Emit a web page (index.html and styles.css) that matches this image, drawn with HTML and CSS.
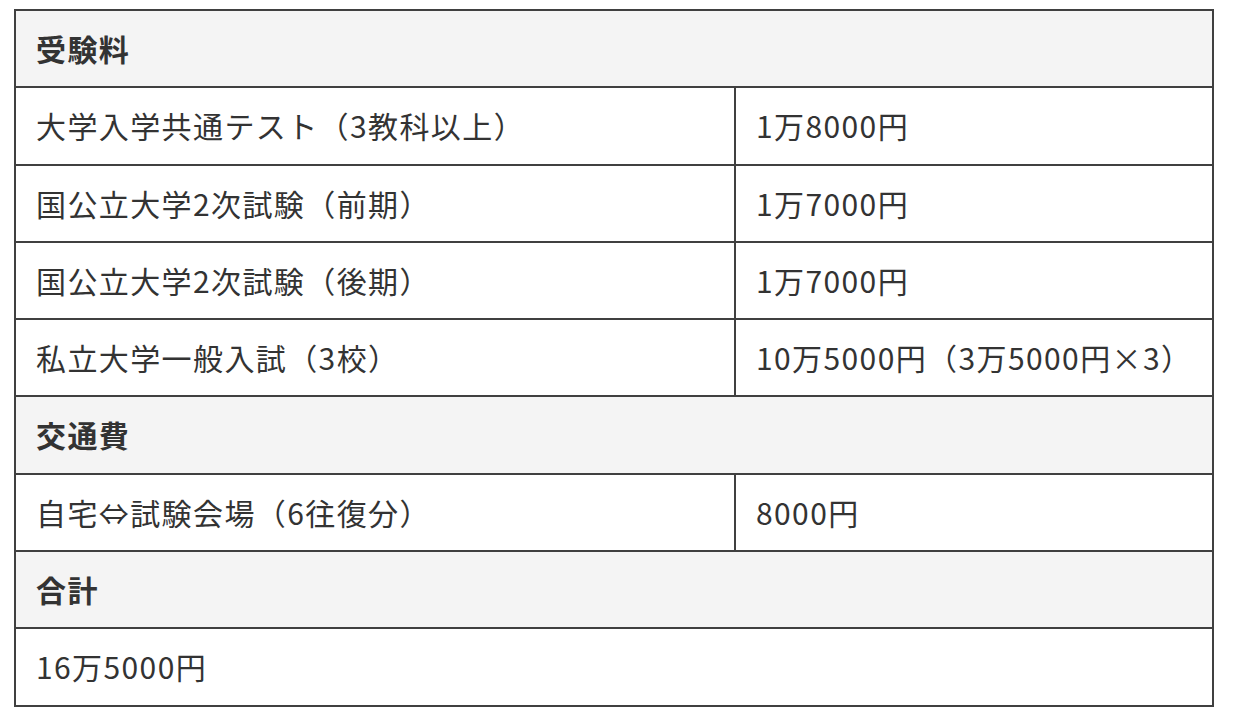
FILE: index.html
```html
<!DOCTYPE html>
<html lang="ja">
<head>
<meta charset="utf-8">
<link rel="stylesheet" href="styles.css">
</head>
<body>
<table class="cost">
  <tbody>
    <tr class="head"><th colspan="2">受験料</th></tr>
    <tr><td class="label">大学入学共通テスト（3教科以上）</td><td>1万8000円</td></tr>
    <tr><td class="label">国公立大学2次試験（前期）</td><td>1万7000円</td></tr>
    <tr><td class="label">国公立大学2次試験（後期）</td><td>1万7000円</td></tr>
    <tr><td class="label">私立大学一般入試（3校）</td><td>10万5000円（3万5000円×3）</td></tr>
    <tr class="head"><th colspan="2">交通費</th></tr>
    <tr><td class="label">自宅⇔試験会場（6往復分）</td><td>8000円</td></tr>
    <tr class="head"><th colspan="2">合計</th></tr>
    <tr><td colspan="2">16万5000円</td></tr>
  </tbody>
</table>
</body>
</html>
```
FILE: styles.css
```css
html, body {
  margin: 0;
  padding: 0;
  background: #ffffff;
}
body {
  padding: 9px 0 0 14px;
  font-family: "Noto Sans CJK JP", "Noto Sans", sans-serif;
  color: #333333;
}
.cost {
  border-collapse: collapse;
  width: 1200px;
  font-size: 30px;
  letter-spacing: 1.4px;
}
.cost th,
.cost td {
  border: 2px solid #404040;
  padding: 15px 20px 15px 20px;
  line-height: 45.3px;
  text-align: left;
  vertical-align: middle;
}
.cost th {
  background: #f4f4f4;
  font-weight: 700;
}
.cost td.label {
  width: 678px;
}
```
